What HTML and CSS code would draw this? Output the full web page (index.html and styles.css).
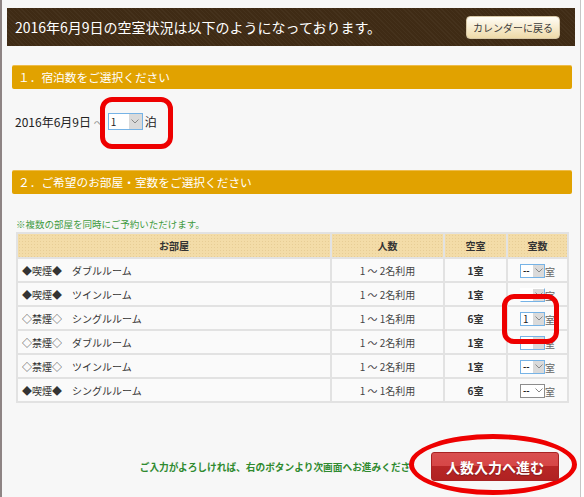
FILE: index.html
```html
<!DOCTYPE html>
<html lang="ja">
<head>
    <meta charset="UTF-8">
    <meta name="viewport" content="width=device-width, initial-scale=1.0">
    <title>空室状況</title>
    <link rel="stylesheet" href="styles.css">
</head>
<body>
    <div class="page">
        <div class="top-bar">
            <h1 class="top-title">2016年6月9日の空室状況は以下のようになっております。</h1>
            <button type="button" class="back-btn">カレンダーに戻る</button>
        </div>

        <h2 class="step">１．宿泊数をご選択ください</h2>
        <div class="nights">
            <span>2016年6月9日 <span class="tilde">～</span></span>
            <span class="sel sel-big"><span class="sel-val">1</span><span class="sel-arr"><svg width="8" height="5" viewBox="0 0 8 5"><polyline points="0.5,0.5 4,4 7.5,0.5" fill="none" stroke="#888" stroke-width="1"/></svg></span></span>
            <span>泊</span>
        </div>

        <h2 class="step step-2">２．ご希望のお部屋・室数をご選択ください</h2>
        <p class="note">※複数の部屋を同時にご予約いただけます。</p>

        <table class="rooms">
            <tr>
                <th class="col-room">お部屋</th>
                <th class="col-people">人数</th>
                <th class="col-free">空室</th>
                <th class="col-count">室数</th>
            </tr>
            <tr>
                <td class="room">◆喫煙◆　ダブルルーム</td>
                <td>1 ～ 2名利用</td>
                <td class="free">1室</td>
                <td><span class="sel"><span class="sel-val">--</span><span class="sel-arr"><svg width="8" height="5" viewBox="0 0 8 5"><polyline points="0.5,0.5 4,4 7.5,0.5" fill="none" stroke="#888" stroke-width="1"/></svg></span></span><span class="unit">室</span></td>
            </tr>
            <tr>
                <td class="room">◆喫煙◆　ツインルーム</td>
                <td>1 ～ 2名利用</td>
                <td class="free">1室</td>
                <td><span class="sel ghost"><span class="sel-val">--</span><span class="sel-arr"><svg width="8" height="5" viewBox="0 0 8 5"><polyline points="0.5,0.5 4,4 7.5,0.5" fill="none" stroke="#888" stroke-width="1"/></svg></span></span><span class="unit">室</span></td>
            </tr>
            <tr>
                <td class="room">◇禁煙◇　シングルルーム</td>
                <td>1 ～ 1名利用</td>
                <td class="free">6室</td>
                <td><span class="sel"><span class="sel-val num">1</span><span class="sel-arr"><svg width="8" height="5" viewBox="0 0 8 5"><polyline points="0.5,0.5 4,4 7.5,0.5" fill="none" stroke="#888" stroke-width="1"/></svg></span></span><span class="unit">室</span></td>
            </tr>
            <tr>
                <td class="room">◇禁煙◇　ダブルルーム</td>
                <td>1 ～ 2名利用</td>
                <td class="free">1室</td>
                <td><span class="sel"><span class="sel-val">--</span><span class="sel-arr"><svg width="8" height="5" viewBox="0 0 8 5"><polyline points="0.5,0.5 4,4 7.5,0.5" fill="none" stroke="#888" stroke-width="1"/></svg></span></span><span class="unit">室</span></td>
            </tr>
            <tr>
                <td class="room">◇禁煙◇　ツインルーム</td>
                <td>1 ～ 2名利用</td>
                <td class="free">1室</td>
                <td><span class="sel"><span class="sel-val">--</span><span class="sel-arr"><svg width="8" height="5" viewBox="0 0 8 5"><polyline points="0.5,0.5 4,4 7.5,0.5" fill="none" stroke="#888" stroke-width="1"/></svg></span></span><span class="unit">室</span></td>
            </tr>
            <tr>
                <td class="room">◆喫煙◆　シングルルーム</td>
                <td>1 ～ 1名利用</td>
                <td class="free">6室</td>
                <td><span class="sel plain"><span class="sel-val">--</span><span class="sel-arr"><svg width="8" height="5" viewBox="0 0 8 5"><polyline points="0.5,0.5 4,4 7.5,0.5" fill="none" stroke="#888" stroke-width="1"/></svg></span></span><span class="unit">室</span></td>
            </tr>
        </table>

        <div class="footer">
            <p class="next-msg">ご入力がよろしければ、右のボタンより次画面へお進みください</p>
            <button type="button" class="next-btn">人数入力へ進む</button>
        </div>

        <!-- red annotation marks -->
        <div class="mark mark-nights"></div>
        <div class="mark mark-rooms"></div>
        <div class="mark-oval"></div>
    </div>
</body>
</html>
```

FILE: styles.css
```css
body {
    margin: 0;
    background: #fff;
}
.page {
    position: relative;
    box-sizing: border-box;
    width: 581px;
    height: 497px;
    overflow: hidden;
    border-left: 2px solid #8e8484;
    border-right: 1px solid #c6c6c6;
    background: #f7f7f7;
    font-family: "Noto Sans CJK JP", "Noto Sans", sans-serif;
    color: #333;
}
.top-bar {
    display: flex;
    align-items: center;
    justify-content: space-between;
    height: 38px;
    margin: 8px 5px 0;
    padding: 0 15px 0 8px;
    background-color: #3f2b15;
    background-image: repeating-linear-gradient(45deg, rgba(255,255,255,0.03) 0 1px, transparent 1px 3px);
}
.top-title {
    margin: 0;
    font-size: 14px;
    font-weight: normal;
    color: #fff;
}
.back-btn {
    width: 94px;
    height: 23px;
    padding: 0;
    border: 1px solid #d6c7a6;
    border-radius: 4px;
    background: linear-gradient(#fffdf6, #f5e8c8 60%, #eedaa8);
    font-family: inherit;
    font-size: 10px;
    color: #3a3a3a;
}
.step {
    height: 24px;
    margin: 19px 8px 0 10px;
    padding-left: 6px;
    border-top: 1px solid #eebc4a;
    box-sizing: border-box;
    border-radius: 2px;
    background: #e1a200;
    font-size: 11.7px;
    font-weight: normal;
    line-height: 22px;
    color: #fff;
}
.step-2 {
    margin-top: 41px;
}
.nights {
    display: flex;
    align-items: center;
    height: 16px;
    margin: 24px 0 0 13px;
    font-size: 12px;
    color: #222;
}
.tilde {
    color: #999;
    font-size: 10px;
}
.sel {
    display: inline-flex;
    box-sizing: border-box;
    width: 25px;
    height: 14px;
    border: 1px solid #76b3e6;
    background: #fff;
    vertical-align: middle;
}
.sel-val {
    flex: 1;
    padding-left: 2px;
    font-size: 9px;
    font-weight: bold;
    line-height: 12px;
    color: #222;
    text-align: left;
}
.sel-val.num {
    font-weight: normal;
    font-size: 10px;
}
.sel-arr {
    display: flex;
    align-items: center;
    justify-content: center;
    width: 11px;
    background: #dadada;
}
.sel-big {
    width: 35px;
    height: 17px;
    margin: 0 2px 0 4px;
}
.sel-big .sel-val {
    font-weight: normal;
    font-size: 10px;
    line-height: 15px;
}
.sel-big .sel-arr {
    width: 13px;
}
.ghost {
    border-top-color: transparent;
    border-left-color: transparent;
}
.ghost .sel-val {
    visibility: hidden;
}
.plain {
    border-color: #8c8c8c;
}
.plain .sel-arr {
    background: #fff;
}
.unit {
    font-size: 10px;
    color: #666;
    vertical-align: middle;
}
.note {
    margin: 24px 0 0 14px;
    font-size: 9.5px;
    line-height: 12px;
    color: #3d9a3d;
}
.rooms {
    width: 553px;
    margin: 2px 0 0 14px;
    border-collapse: collapse;
    border: 2px solid #dcdcdc;
    font-size: 10px;
}
.rooms th,
.rooms td {
    padding: 0;
    border: 2px solid #e2e2e2;
    text-align: center;
}
.rooms th {
    height: 23px;
    background-color: #f3dca8;
    background-image: radial-gradient(rgba(180,140,60,0.18) 0.6px, transparent 0.8px);
    background-size: 3px 3px;
    font-weight: bold;
    color: #333;
}
.rooms td {
    height: 22px;
    background: #fafafa;
    color: #444;
}
.col-room { width: 312px; }
.col-people { width: 111px; }
.col-free { width: 61px; }
.rooms td.room {
    padding-left: 4px;
    text-align: left;
    color: #333;
}
.rooms td.free {
    font-weight: bold;
    color: #333;
}
.footer {
    display: flex;
    align-items: center;
    justify-content: flex-end;
    gap: 11px;
    margin-top: 49px;
    padding-right: 21px;
}
.next-msg {
    margin: 0;
    font-size: 9.7px;
    font-weight: bold;
    color: #2f8a2f;
    white-space: nowrap;
}
.next-btn {
    position: relative;
    z-index: 2;
    width: 128px;
    height: 29px;
    padding: 0;
    border: 1px solid #a82222;
    border-radius: 3px;
    background: linear-gradient(#d94f4f 0, #d64646 50%, #b82626 50%, #b02222 100%);
    font-family: inherit;
    font-size: 14px;
    font-weight: bold;
    color: #fff;
    text-shadow: 0 1px 1px rgba(0,0,0,0.3);
}
.mark {
    position: absolute;
    box-sizing: border-box;
    border: 5px solid #ee0000;
    border-radius: 12px;
}
.mark-nights {
    left: 98px;
    top: 97px;
    width: 73px;
    height: 52px;
}
.mark-rooms {
    left: 500px;
    top: 294px;
    width: 57px;
    height: 50px;
}
.mark-oval {
    position: absolute;
    z-index: 1;
    left: 407px;
    top: 434px;
    box-sizing: border-box;
    width: 168px;
    height: 61px;
    border: 5px solid #ee0000;
    border-radius: 50%;
    background: #f7f7f7;
}
```
